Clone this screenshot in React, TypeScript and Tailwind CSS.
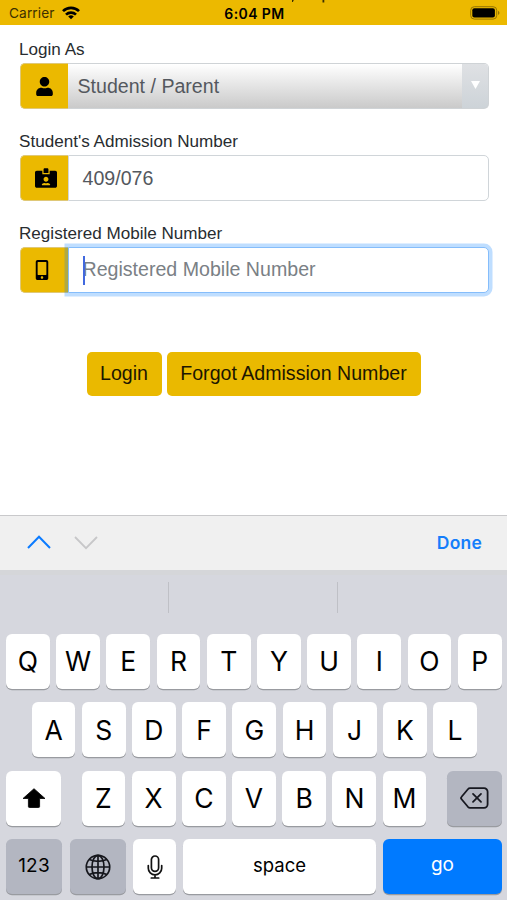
import type { ReactNode } from 'react';
import { FaIdCardAlt, FaMobileAlt, FaUser } from 'react-icons/fa';

const topRow = ['Q', 'W', 'E', 'R', 'T', 'Y', 'U', 'I', 'O', 'P'];
const homeRow = ['A', 'S', 'D', 'F', 'G', 'H', 'J', 'K', 'L'];
const bottomRow = ['Z', 'X', 'C', 'V', 'B', 'N', 'M'];

function StatusBar() {
  return (
    <header className="relative h-[25px] shrink-0 bg-[#ecb900] font-['Inter',sans-serif] text-black">
      {/* what is left of the scrolled page at the screen edge */}
      <svg width="36" height="3" viewBox="0 0 36 3" className="absolute left-[290px] top-0" fill="#3d3000">
        <path d="M2 0h1.8L2.9 2H2zM32.5 0h1.8v2.4h-1.8z" />
      </svg>
      <div className="grid h-full grid-cols-3 items-center pl-[9px] pr-[7px] pt-[2px]">
        <div className="flex items-center gap-[7px] text-[13.7px] text-[#3d3000]">
          <span className="tracking-[0.1px]">Carrier</span>
          <svg width="18" height="14" viewBox="0 0 18 14" fill="none" stroke="#000" strokeWidth="2.7" className="-mt-px">
            <path d="M1 5.1a11.4 11.4 0 0 1 16 0" />
            <path d="M4 8.6a7.2 7.2 0 0 1 10 0" />
            <path d="M9 13.3 6.2 10.5a4 4 0 0 1 5.6 0Z" fill="#000" stroke="none" />
          </svg>
        </div>
        <span className="text-center text-[14px] font-semibold tracking-[0.4px]">6:04 PM</span>
        <svg width="30" height="14" viewBox="0 0 30 14" className="-mt-[2px] justify-self-end">
          <rect x="0.7" y="0.7" width="26" height="12.4" rx="3.6" fill="none" stroke="#957400" strokeWidth="1" />
          <rect x="2.3" y="2.3" width="22.6" height="9.2" rx="2" fill="#000" />
          <path d="M28 4.8c2 .8 2 3.5 0 4.2z" fill="#957400" />
        </svg>
      </div>
    </header>
  );
}

function Field({ label, icon, children }: { label: string; icon: ReactNode; children: ReactNode }) {
  return (
    <div className="mb-[17.6px]">
      <label className="-ml-[0.5px] block h-[28px] pt-[2px] text-[17.1px] leading-[25px] text-[#282c30]">{label}</label>
      <div className="flex h-[46px]">
        <span className="flex w-[48px] shrink-0 items-center rounded-l-[5px] border border-r-0 border-[#dfc878] bg-[#ebb900] pl-[14px] text-black">
          {icon}
        </span>
        {children}
      </div>
    </div>
  );
}

function Key({ children, className = 'w-[43.8px] bg-white' }: { children: ReactNode; className?: string }) {
  return (
    <button
      className={`flex h-[55px] shrink-0 items-center justify-center rounded-[6px] shadow-[0_1.3px_0_#999ba0] ${className}`}
    >
      {children}
    </button>
  );
}

function Letters({ keys }: { keys: string[] }) {
  return (
    <div className="flex gap-[6.4px]">
      {keys.map((k) => (
        <Key key={k}>
          <span className="text-[26.5px] leading-none">{k}</span>
        </Key>
      ))}
    </div>
  );
}

function Keyboard() {
  return (
    <section className="h-[385px] shrink-0 border-t border-[#c9c9cb] bg-[#d6d7de] font-['Inter',sans-serif] text-black">
      <div className="flex h-[53.5px] items-center bg-[#f0f0f0] pl-[27px] pr-[25px]">
        <svg width="24" height="14" viewBox="0 0 24 14" fill="none" stroke="#0b7bff" strokeWidth="2" className="-mt-[2px]">
          <path d="M1 13 12 1.8 23 13" />
        </svg>
        <svg width="24" height="14" viewBox="0 0 24 14" fill="none" stroke="#c7c7c9" strokeWidth="1.8" className="ml-[23px]">
          <path d="M1 1 12 12.2 23 1" />
        </svg>
        <span className="ml-auto text-[17.5px] font-semibold tracking-[0.2px] text-[#157efb]">Done</span>
      </div>
      <div className="grid h-[64.5px] grid-cols-3 border-t-[5px] border-[#d5d6d9] pt-[7px]">
        <div className="h-[31px] border-r border-[#bfc0c6]" />
        <div className="h-[31px] border-r border-[#bfc0c6]" />
        <div />
      </div>
      <div className="flex flex-col gap-[13.4px]">
        <div className="flex justify-center pl-[0.6px]">
          <Letters keys={topRow} />
        </div>
        <div className="flex justify-center pl-[1.6px]">
          <Letters keys={homeRow} />
        </div>
        <div className="flex justify-between pl-[6px] pr-[5px]">
          <Key className="w-[55px] bg-white">
            <svg width="24" height="20" viewBox="0 0 24 20">
              <path d="M12 .7 23 10.5h-5.4v8a1 1 0 0 1-1 1H7.4a1 1 0 0 1-1-1v-8H1Z" stroke="#000" strokeWidth=".8" strokeLinejoin="round" />
            </svg>
          </Key>
          <Letters keys={bottomRow} />
          <Key className="w-[55px] bg-[#b3b6c1]">
            <svg width="29" height="22" viewBox="0 0 29 22" fill="none" stroke="#171820" strokeWidth="1.8" strokeLinecap="round" strokeLinejoin="round">
              <path d="M10 1.2h14a3.6 3.6 0 0 1 3.6 3.6v12.4a3.6 3.6 0 0 1-3.6 3.6H10c-.9 0-1.5-.4-2.1-1L1.6 12.2c-.8-.8-.8-1.6 0-2.4l6.3-7.6c.6-.7 1.2-1 2.1-1Z" />
              <path d="m13 6.9 8 8m0-8-8 8" />
            </svg>
          </Key>
        </div>
        <div className="flex pl-[6px] pr-[5px]">
          <Key className="w-[56px] bg-[#b3b6c1]">
            <span className="text-[19px] tracking-[0.2px]">123</span>
          </Key>
          <Key className="ml-[8px] w-[56px] bg-[#b3b6c1]">
            <svg width="26" height="26" viewBox="0 0 26 26" fill="none" stroke="#15161c" strokeWidth="1.7">
              <circle cx="13" cy="13" r="11.7" />
              <ellipse cx="13" cy="13" rx="6" ry="11.7" />
              <path d="M13 1v24M1 13h24M4.2 5.6c5 2.3 12.6 2.3 17.6 0M4.2 20.4c5-2.3 12.6-2.3 17.6 0" />
            </svg>
          </Key>
          <Key className="ml-[7px] w-[43px] bg-white">
            <svg width="16" height="24" viewBox="0 0 16 24" fill="none" stroke="#111" strokeWidth="1.7" strokeLinecap="round">
              <rect x="4.4" y="1" width="7.2" height="15.4" rx="3.6" />
              <path d="M1.3 10.6v2.6a6.7 6.7 0 0 0 13.4 0v-2.6M8 20v3M4.3 23h7.4" />
            </svg>
          </Key>
          <Key className="ml-[7px] w-[193px] bg-white">
            <span className="-mt-[2px] text-[18.5px]">space</span>
          </Key>
          <Key className="ml-[7px] w-[119px] bg-[#007aff] text-white">
            <span className="-mt-[2px] text-[19px]">go</span>
          </Key>
        </div>
      </div>
    </section>
  );
}

export default function App() {
  return (
    <div className="flex h-[900px] w-[507px] flex-col overflow-hidden bg-white font-['Liberation_Sans',sans-serif]">
      <StatusBar />
      <main className="flex-1 pl-[19.5px] pr-[18px] pt-[10.4px]">
        <Field label="Login As" icon={<FaUser size={19} />}>
          <div className="flex flex-1 overflow-hidden rounded-r-[5px] border border-l-0 border-[#cfd3d6] bg-linear-to-b from-white to-[#cacaca] text-[19.6px] text-[#54585e]">
            <span className="flex-1 pl-[10px] leading-[44px]">Student / Parent</span>
            <span className="flex w-[26px] items-center justify-center bg-linear-to-b from-[#dfe1e4] to-[#cdd3d8] pb-[3px]">
              <svg width="9" height="8" viewBox="0 0 9 8">
                <path d="M0 0h9L4.5 8z" fill="#fff" />
              </svg>
            </span>
          </div>
        </Field>
        <Field label="Student's Admission Number" icon={<FaIdCardAlt size={22} />}>
          <div className="flex-1 rounded-r-[5px] border border-[#d0d5d9] pl-[14px] text-[19.6px] leading-[44px] text-[#54585e]">
            409/076
          </div>
        </Field>
        <Field label="Registered Mobile Number" icon={<FaMobileAlt size={20} className="-ml-[2.5px]" />}>
          <div className="relative flex flex-1 items-center rounded-r-[5px] border border-[#85bdfb] bg-white pl-[14px] text-[19.6px] text-[#7a8085] shadow-[0_0_0_3.5px_rgba(0,123,255,0.25)]">
            <span className="absolute left-[14px] top-[8px] h-[29px] w-[2px] bg-[#4169df]" />
            <span>Registered Mobile Number</span>
          </div>
        </Field>
        <div className="flex justify-center gap-[5px] pr-[1.5px] pt-[41.8px] text-[19.6px] text-[#1c1600]">
          <button className="h-[44px] w-[75px] rounded-[5px] bg-[#eab900]">Login</button>
          <button className="h-[44px] w-[254px] rounded-[5px] bg-[#eab900]">Forgot Admission Number</button>
        </div>
      </main>
      <Keyboard />
    </div>
  );
}
